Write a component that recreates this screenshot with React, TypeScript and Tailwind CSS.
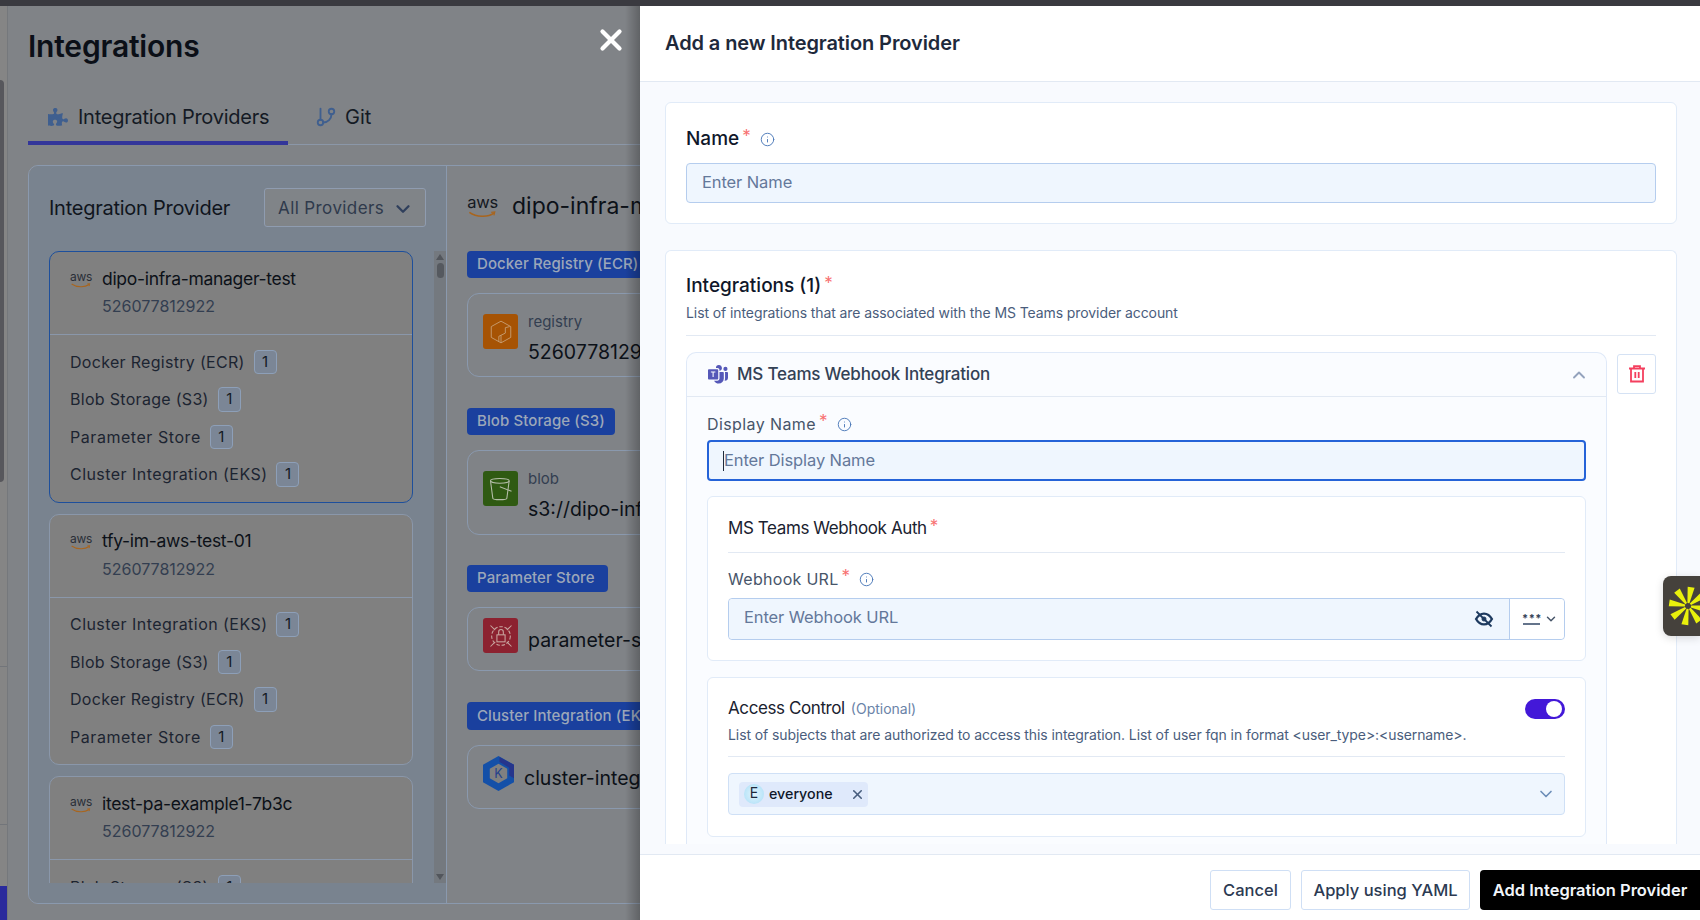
import { ChevronDown, ChevronUp, GitBranch, Info, X } from "lucide-react";
import { BsMicrosoftTeams } from "react-icons/bs";
import { FaPuzzlePiece } from "react-icons/fa";

type Provider = { name: string; rows: { label: string; count: number }[] };

const providers: Provider[] = [
  {
    name: "dipo-infra-manager-test",
    rows: [
      { label: "Docker Registry (ECR)", count: 1 },
      { label: "Blob Storage (S3)", count: 1 },
      { label: "Parameter Store", count: 1 },
      { label: "Cluster Integration (EKS)", count: 1 },
    ],
  },
  {
    name: "tfy-im-aws-test-01",
    rows: [
      { label: "Cluster Integration (EKS)", count: 1 },
      { label: "Blob Storage (S3)", count: 1 },
      { label: "Docker Registry (ECR)", count: 1 },
      { label: "Parameter Store", count: 1 },
    ],
  },
  {
    name: "itest-pa-example1-7b3c",
    rows: [
      { label: "Blob Storage (S3)", count: 1 },
      { label: "Parameter Store", count: 1 },
    ],
  },
];

const rowTracking: Record<string, string> = {
  "Docker Registry (ECR)": "tracking-[0.3px]",
  "Blob Storage (S3)": "tracking-[0.3px]",
  "Parameter Store": "tracking-[0.55px]",
  "Cluster Integration (EKS)": "tracking-[0.45px]",
};

function AwsLogo({ large }: { large?: boolean }) {
  return (
    <div className={large ? "ml-[1px] flex w-[29px] shrink-0 flex-col items-center" : "flex w-[20px] shrink-0 flex-col items-center"}>
      <span className={large ? "text-[16.500px] leading-[15px] tracking-[-0.3px] text-[#14181f]" : "text-[12px] leading-[11px] tracking-[-0.3px] text-[#2a2f38]"}>
        aws
      </span>
      <svg viewBox="0 0 32 8" className={large ? "mt-[1px] h-[7px] w-[29px]" : "mt-[1px] h-[5px] w-[20px]"}>
        <path d="M1 1.5C9 7 22 7.5 29 2.5" fill="none" stroke="#a8651e" strokeWidth="1.8" />
        <path d="M26 1.5l4-.5-1 4" fill="none" stroke="#a8651e" strokeWidth="1.4" />
      </svg>
    </div>
  );
}

function EcrIcon() {
  return (
    <div className="flex h-[35px] w-[35px] shrink-0 items-center justify-center rounded-[3px] bg-[#a65304]">
      <svg viewBox="0 0 24 24" className="h-[26px] w-[26px]" fill="none" stroke="#c9a27a" strokeWidth="0.8">
        <path d="M12 2l9 5v10l-9 5-9-5V7z" />
        <path d="M12 22v-7l4-2V8l4-1M12 15l-2 1v5" />
      </svg>
    </div>
  );
}

function S3Icon() {
  return (
    <div className="flex h-[35px] w-[35px] shrink-0 items-center justify-center rounded-[3px] bg-[#2f5a12]">
      <svg viewBox="0 0 24 24" className="h-[28px] w-[28px]" fill="none" stroke="#b4bda8" strokeWidth="0.9">
        <ellipse cx="11" cy="5" rx="8" ry="2" />
        <path d="M3 5l2 15c.3 1.5 11.700 1.500 12 0l2-15" />
        <path d="M11 10l10 4" />
      </svg>
    </div>
  );
}

function ParameterIcon() {
  return (
    <div className="flex h-[35px] w-[35px] shrink-0 items-center justify-center rounded-[3px] bg-[#8c2230]">
      <svg viewBox="0 0 24 24" className="h-[28px] w-[28px]" fill="none" stroke="#c9a6a0" strokeWidth="0.9">
        <circle cx="12" cy="12" r="8" strokeDasharray="3 1.500" />
        <rect x="8.500" y="11" width="7" height="6" />
        <path d="M10 11V8.500a2 2 0 0 1 4 0V11M3 3l4 4M21 3l-4 4M3 21l4-4M21 21l-4-4" />
      </svg>
    </div>
  );
}

function EksIcon() {
  return (
    <svg viewBox="0 0 32 36" className="h-[35px] w-[31px] shrink-0">
      <path d="M16 0L32 9v18l-16 9L0 27V9z" fill="#1450a8" />
      <path d="M17 1l15 8v14l-5-3V12l-10-6z" fill="#26358c" />
      <path d="M16 8l9 5v10l-9 5-9-5V13z" fill="#808080" />
      <text x="16" y="23" textAnchor="middle" fontSize="13" fill="#26408c" fontFamily="Inter, sans-serif">
        K
      </text>
    </svg>
  );
}

function ProviderCard({ provider, selected }: { provider: Provider; selected?: boolean }) {
  return (
    <div className={`shrink-0 rounded-[10px] border bg-[#808080] ${selected ? "border-[#1d4f9c]" : "border-[#8a97aa]"}`}>
      <div className="flex h-[83px] flex-col border-b border-[#8a97aa] pl-[21px] pt-[14px]">
        <div className="flex h-[26px] items-center gap-[11px]">
          <AwsLogo />
          <span className="text-[17.5px] tracking-[-0.3px] text-[#0c1118]">{provider.name}</span>
        </div>
        <span className="ml-[31px] mt-[4px] text-[16px] leading-[20px] text-[#333e50]">526077812922</span>
      </div>
      <div className="flex flex-col gap-[13px] pb-[15px] pl-[20px] pt-[14.500px]">
        {provider.rows.map((row) => (
          <div key={row.label} className="flex h-[24.500px] items-center gap-[9px]">
            <span className={`text-[16px] text-[#1c2431] ${rowTracking[row.label]}`}>{row.label}</span>
            <span className="flex h-full w-[23px] items-center justify-center rounded-[4px] border border-[#8d9fb8] bg-[#7b8696] text-[15px] text-[#141a24]">
              {row.count}
            </span>
          </div>
        ))}
      </div>
    </div>
  );
}

function ResourceCard({ icon, sub, name, h, tight }: { icon: React.ReactNode; sub?: string; name: string; h: string; tight?: boolean }) {
  return (
    <div className={`flex w-[900px] items-start rounded-[12px] border border-[#8a99ae] px-[15px] ${tight ? "gap-[10px]" : "gap-[10px]"} ${sub ? "pt-[20px]" : "pt-[10px]"} ${h}`}>
      {icon}
      <div className="flex flex-col">
        {sub && <span className="text-[15px] leading-[15px] text-[#333e50]">{sub}</span>}
        <span className={`text-[19.500px] leading-[28px] text-[#0c1118] ${sub ? "mt-[9px]" : "mt-[8px]"}`}>{name}</span>
      </div>
    </div>
  );
}

function Chip({ label, w, h }: { label: string; w: string; h: string }) {
  return (
    <div className={`flex items-center rounded-[4px] bg-[#1a409e] pl-[10px] text-[15px] font-medium tracking-[0.1px] whitespace-nowrap text-[#9ca7b9] ${h} ${w}`}>
      {label}
    </div>
  );
}

function Star() {
  return <span className="relative top-[-3px] ml-[3px] text-[17px] leading-none text-[#f87171]">*</span>;
}

function InfoDot({ className }: { className: string }) {
  return <Info size={15} strokeWidth={1.500} className={`text-[#4a78b8] ${className}`} />;
}

function EyeOff() {
  return (
    <svg viewBox="0 0 24 24" className="h-[20px] w-[20px] text-[#1e3a5f]" fill="none" stroke="currentColor">
      <path d="M2.500 12C5 7.500 8.500 5.500 12 5.500s7 2 9.500 6.500c-2.500 4.500-6 6.500-9.500 6.500S5 16.500 2.500 12z" strokeWidth="2.800" />
      <circle cx="12" cy="12" r="2.500" fill="currentColor" strokeWidth="1" />
      <path d="M3 3l18 18" strokeWidth="2.200" />
    </svg>
  );
}

function Asterisk() {
  const angles = [8, 53, 98, 143, 188, 233, 278, 323];
  return (
    <svg viewBox="-20 -20 40 40" className="h-[40px] w-[40px] shrink-0">
      {angles.map((a) => (
        <polygon key={a} points="-1,-3 1,-3 4,-19 -3,-19" fill="#e8f00c" transform={`rotate(${a})`} />
      ))}
    </svg>
  );
}

export default function App() {
  return (
    <div className="relative flex h-screen w-full flex-col overflow-hidden bg-[#808387] font-['Inter',sans-serif]">
      <div className="h-[6px] shrink-0 bg-[#3a3a40]" />

      <div className="flex min-h-0 flex-1">
        {/* collapsed nav behind the overlay */}
        <div className="flex w-[8px] shrink-0 flex-col border-r border-[#75787c] bg-[#858585]">
          <div className="mt-[74px] h-[402px] w-[4px] rounded-r bg-[#57575c]" />
          <div className="mt-[184px] h-px bg-[#72757a]" />
          <div className="mt-[157px] h-px bg-[#72757a]" />
          <div className="mt-[61px] flex-1 bg-[#2a2a9c]" />
        </div>

        <div className="flex w-[632px] shrink-0 flex-col overflow-hidden pl-[20px]">
          <h1 className="mt-[21px] text-[30px] leading-[38px] font-semibold tracking-[-0.2px] text-[#0b0f17]">Integrations</h1>

          <div className="mt-[32px] flex h-[48px] shrink-0 items-start border-b border-[#8b97a8]">
            <div className="flex h-[48px] w-[260px] items-start gap-[10px] border-b-[4px] border-[#33369a] pl-[20px] pt-[6px]">
              <FaPuzzlePiece size={20} className="mt-[4px] text-[#3f5f8f]" />
              <span className="text-[20px] leading-[28px] tracking-[-0.26px] text-[#141a24]">Integration Providers</span>
            </div>
            <div className="ml-[27px] flex items-center gap-[8px] pt-[6px]">
              <GitBranch size={22} className="text-[#3f5f8f]" />
              <span className="text-[20px] leading-[28px] text-[#141a24]">Git</span>
            </div>
          </div>

          <div className="mt-[20px] flex h-[739px] w-[1400px] shrink-0 rounded-t-[10px] rounded-b-[10px] border border-[#8a99ae]">
            <div className="flex w-[418px] shrink-0 flex-col rounded-l-[10px] border-r border-[#8a99ae] bg-[#79838f] pb-[20px] pl-[20px]">
              <div className="mt-[22px] flex h-[39px] shrink-0 items-center justify-between pr-[20px]">
                <span className="text-[20px] tracking-[-0.25px] text-[#10151d]">Integration Provider</span>
                <div className="flex h-full w-[162px] items-center justify-between rounded-[3px] border border-[#8f9cb0] bg-[#808488] pl-[13px] pr-[11px] pt-[2px] text-[17px] tracking-[0.4px] text-[#2f3a4c]">
                  All Providers
                  <ChevronDown size={22} strokeWidth={2.500} className="text-[#2f3f5c]" />
                </div>
              </div>
              <div className="mt-[24px] flex min-h-0 flex-1">
                <div className="flex min-w-0 flex-1 flex-col gap-[11px] overflow-hidden">
                  {providers.map((p, i) => (
                    <ProviderCard key={p.name} provider={p} selected={i === 0} />
                  ))}
                </div>
                <div className="ml-[21px] flex w-[12px] shrink-0 flex-col items-center bg-[#74797f] py-[3px]">
                  <div className="h-0 w-0 border-x-[4px] border-b-[6px] border-x-transparent border-b-[#52565c]" />
                  <div className="mt-[3px] h-[15px] w-[7px] rounded-full bg-[#55595f]" />
                  <div className="mt-auto h-0 w-0 border-x-[4px] border-t-[6px] border-x-transparent border-t-[#52565c]" />
                </div>
              </div>
            </div>

            <div className="flex min-w-0 flex-1 flex-col bg-[#808387] pl-[20px]">
              <div className="mt-[23px] flex h-[34px] items-center gap-[15px]">
                <AwsLogo large />
                <span className="text-[23px] text-[#0c1118]">dipo-infra-manager-test</span>
              </div>
              <div className="mt-[28px] flex flex-col">
                <Chip label="Docker Registry (ECR)" w="w-[190px]" h="h-[27px]" />
                <div className="mt-[15px]">
                  <ResourceCard icon={<EcrIcon />} sub="registry" name="526077812922.dkr.ecr" h="h-[84px]" />
                </div>
                <div className="mt-[31px]">
                  <Chip label="Blob Storage (S3)" w="w-[148px]" h="h-[27px]" />
                </div>
                <div className="mt-[15px]">
                  <ResourceCard icon={<S3Icon />} sub="blob" name="s3://dipo-infra-bucket" h="h-[85px]" />
                </div>
                <div className="mt-[30px]">
                  <Chip label="Parameter Store" w="w-[141px]" h="h-[27px]" />
                </div>
                <div className="mt-[15px]">
                  <ResourceCard icon={<ParameterIcon />} name="parameter-store" h="h-[64px]" />
                </div>
                <div className="mt-[31px]">
                  <Chip label="Cluster Integration (EKS)" w="w-[210px]" h="h-[28px]" />
                </div>
                <div className="mt-[15px]">
                  <ResourceCard icon={<EksIcon />} name="cluster-integration" h="h-[64px]" tight />
                </div>
              </div>
            </div>
          </div>
        </div>
      </div>

      {/* close button and shadow sit on the overlay */}
      <X size={34} strokeWidth={3} className="absolute left-[594px] top-[23px] text-white" />
      <div className="absolute bottom-0 left-[625px] top-[6px] w-[15px] bg-gradient-to-r from-transparent to-black/25" />

      <div className="absolute bottom-0 left-[640px] right-0 top-[6px] flex flex-col bg-white">
        <div className="flex h-[76px] shrink-0 items-center border-b border-[#e2e9f3] pb-[1px] pl-[25px]">
          <h2 className="text-[20px] font-semibold tracking-[-0.1px] text-[#1e293b]">Add a new Integration Provider</h2>
        </div>

        <div className="flex min-h-0 flex-1 flex-col bg-[#f8fafe] pb-[10px] pl-[25px] pr-[23px] pt-[20px]">
          <div className="h-[122px] shrink-0 rounded-[6px] border border-[#e1ebf8] bg-white px-[20px] pt-[21px]">
            <div className="flex h-[30px] items-center">
              <span className="text-[19px] font-medium text-[#0f172a]">Name</span>
              <Star />
              <InfoDot className="ml-[9px]" />
            </div>
            <div className="mt-[9px] flex h-[40px] items-center rounded-[4px] border border-[#b5cdee] bg-[#eff6fe] pb-[2px] pl-[15px] text-[16.500px] tracking-[-0.1px] text-[#64789a]">
              Enter Name
            </div>
          </div>

          <div className="mt-[26px] flex min-h-0 flex-1 flex-col overflow-hidden rounded-t-[6px] border border-b-0 border-[#e1ebf8] bg-white px-[20px] pt-[23px]">
            <div className="flex h-[24px] shrink-0 items-center">
              <span className="text-[19px] font-medium text-[#0f172a]">Integrations (1)</span>
              <Star />
            </div>
            <p className="mt-[5px] h-[20px] shrink-0 text-[14px] leading-[20px] tracking-[-0.09px] text-[#4a5d7c]">
              List of integrations that are associated with the MS Teams provider account
            </p>
            <div className="mt-[12px] h-px shrink-0 bg-[#e2e9f3]" />

            <div className="mt-[16px] flex min-h-0 flex-1 items-start gap-[10px]">
              <div className="h-full min-w-0 flex-1 rounded-t-[10px] border border-b-0 border-[#dfe9f8] bg-[#fafcff]">
                <div className="flex h-[44px] items-center border-b border-[#e2e9f3] pl-[21px] pr-[17px]">
                  <BsMicrosoftTeams size={20} className="text-[#5558b8]" />
                  <span className="ml-[9px] flex-1 text-[17px] font-medium tracking-[-0.2px] text-[#334155]">MS Teams Webhook Integration</span>
                  <ChevronUp size={20} strokeWidth={2.250} className="text-[#94a3bd]" />
                </div>

                <div className="flex flex-col px-[20px]">
                  <div className="mt-[15px] flex h-[24px] items-center">
                    <span className="text-[16px] tracking-[0.4px] text-[#475569]">Display Name</span>
                    <Star />
                    <InfoDot className="ml-[9px]" />
                  </div>
                  <div className="mt-[4px] flex h-[41px] items-center rounded-[4px] border-2 border-[#2563d8] bg-[#eff6fe] pl-[14px] text-[16.500px] tracking-[-0.1px] text-[#64789a]">
                    <span className="h-[20px] w-px bg-[#1e293b]" />
                    Enter Display Name
                  </div>

                  <div className="mt-[15px] h-[165px] rounded-[6px] border border-[#e1ebf8] bg-white px-[20px]">
                    <div className="flex h-[56px] items-center border-b border-[#e2e9f3] pt-[9px]">
                      <span className="text-[17px] tracking-[-0.4px] text-[#1a2230]">MS Teams Webhook Auth</span>
                      <Star />
                    </div>
                    <div className="mt-[14px] flex h-[24px] items-center">
                      <span className="text-[16px] tracking-[0.3px] text-[#475569]">Webhook URL</span>
                      <Star />
                      <InfoDot className="ml-[9px]" />
                    </div>
                    <div className="mt-[7px] flex h-[42px] rounded-[4px] border border-[#b5cdee]">
                      <div className="flex flex-1 items-center rounded-l-[4px] border-r border-[#b5cdee] bg-[#eff6fe] pl-[15px] pr-[15px] text-[16.500px] tracking-[-0.1px] text-[#64789a]">
                        <span className="flex-1 pb-[3px]">Enter Webhook URL</span>
                        <EyeOff />
                      </div>
                      <div className="flex w-[54px] items-center gap-[2px] rounded-r-[4px] bg-white pl-[12px]">
                        <div className="flex flex-col items-center">
                          <span className="text-[11px] leading-[8px] font-bold tracking-[0.5px] text-[#334155]">***</span>
                          <span className="mt-[1px] h-[2px] w-[17px] bg-[#64748b]" />
                        </div>
                        <ChevronDown size={14} strokeWidth={2.500} className="text-[#475569]" />
                      </div>
                    </div>
                  </div>

                  <div className="mt-[16px] h-[160px] rounded-[6px] border border-[#e1ebf8] bg-white px-[20px]">
                    <div className="flex h-[42px] items-center justify-between pt-[19px]">
                      <div className="flex items-baseline gap-[6px]">
                        <span className="text-[17px] tracking-[-0.4px] text-[#1a2230]">Access Control</span>
                        <span className="text-[14px] text-[#6a83a8]">(Optional)</span>
                      </div>
                      <div className="flex h-[20px] w-[40px] items-center justify-end rounded-full bg-[#4318d8] pr-[3px]">
                        <span className="h-[16px] w-[16px] rounded-full bg-white" />
                      </div>
                    </div>
                    <p className="mt-[5px] h-[20px] whitespace-nowrap text-[14px] leading-[20px] tracking-[-0.09px] text-[#4a5d7c]">
                      List of subjects that are authorized to access this integration. List of user fqn in format &lt;user_type&gt;:&lt;username&gt;.
                    </p>
                    <div className="mt-[11px] h-px bg-[#e2e9f3]" />
                    <div className="mt-[16px] flex h-[42px] items-center justify-between rounded-[4px] border border-[#cfe0f6] bg-[#eff6fe] pl-[10px] pr-[8px]">
                      <div className="flex h-[25px] w-[129px] items-center rounded-[4px] bg-[#dfe9fb] pl-[5px]">
                        <span className="flex h-[20px] w-[20px] items-center justify-center rounded-full bg-[radial-gradient(circle,#e2f4fd,#a9def7)] pb-[3px] text-[14px] text-[#1e293b]">E</span>
                        <span className="ml-[5px] text-[14.250px] font-medium text-[#0f172a]">everyone</span>
                        <X size={15} strokeWidth={2.500} className="ml-[17px] text-[#475d7e]" />
                      </div>
                      <ChevronDown size={20} className="text-[#6c8db8]" />
                    </div>
                  </div>
                </div>
              </div>

              <div className="mt-[2px] flex h-[40px] w-[39px] shrink-0 items-center justify-center rounded-[3px] border border-[#d5e2f4] bg-white">
                <svg viewBox="0 0 18 18" className="h-[18px] w-[18px]" fill="none" stroke="#f43f5e" strokeWidth="1.800">
                  <path d="M1 3.500h16M6 3V1.200h6V3M3 3.500V16.500h12V3.500M7.300 7v6M10.700 7v6" />
                </svg>
              </div>
            </div>
          </div>
        </div>

        <div className="flex h-[66px] shrink-0 items-end justify-end gap-[10px] border-t border-[#e2e9f3] bg-white pb-[10px]">
          <button className="h-[40px] w-[81px] rounded-[3px] border border-[#cfdff5] bg-white text-[16.500px] font-medium text-[#2c3a52]">Cancel</button>
          <button className="h-[40px] w-[169px] rounded-[3px] border border-[#cfdff5] bg-white text-[16.500px] font-medium text-[#2c3a52]">Apply using YAML</button>
          <button className="h-[40px] w-[220px] rounded-l-[4px] bg-black text-[16.500px] font-semibold text-[#f1f5f9]">Add Integration Provider</button>
        </div>
      </div>

      <div className="absolute right-0 top-[576px] flex h-[60px] w-[37px] items-center overflow-hidden rounded-l-[8px] bg-[#45413c] pl-[5px] shadow-[0_2px_8px_rgba(0,0,0,0.15)]">
        <Asterisk />
      </div>
    </div>
  );
}
